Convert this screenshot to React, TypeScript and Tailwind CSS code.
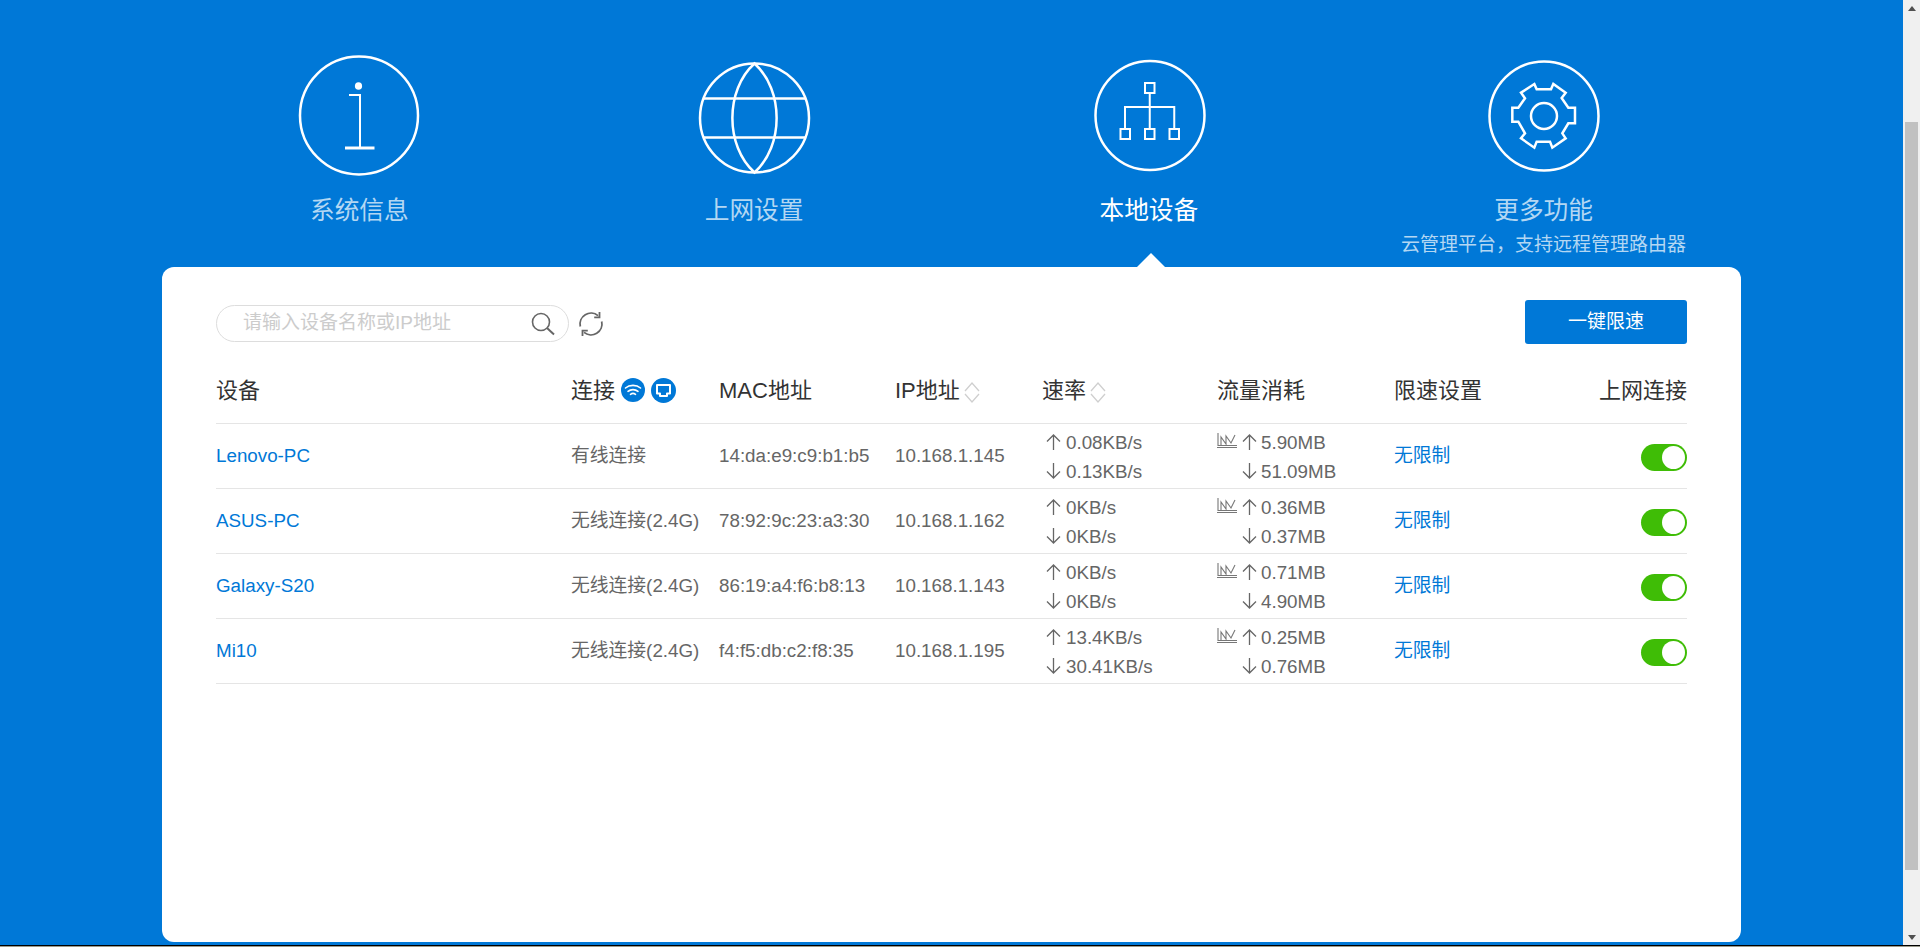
const FONT = "font-['Liberation_Sans','Noto_Sans_CJK_SC',sans-serif]";

const rows = [
  { name: "Lenovo-PC", conn: "有线连接", mac: "14:da:e9:c9:b1:b5", ip: "10.168.1.145", up: "0.08KB/s", down: "0.13KB/s", sent: "5.90MB", recv: "51.09MB" },
  { name: "ASUS-PC", conn: "无线连接(2.4G)", mac: "78:92:9c:23:a3:30", ip: "10.168.1.162", up: "0KB/s", down: "0KB/s", sent: "0.36MB", recv: "0.37MB" },
  { name: "Galaxy-S20", conn: "无线连接(2.4G)", mac: "86:19:a4:f6:b8:13", ip: "10.168.1.143", up: "0KB/s", down: "0KB/s", sent: "0.71MB", recv: "4.90MB" },
  { name: "Mi10", conn: "无线连接(2.4G)", mac: "f4:f5:db:c2:f8:35", ip: "10.168.1.195", up: "13.4KB/s", down: "30.41KB/s", sent: "0.25MB", recv: "0.76MB" },
];

const COLS = "grid grid-cols-[355px_148px_176px_147px_175px_177px_150px_1fr] items-center border-b border-[#e5e5e5]";

const InfoIcon = () => (
  <svg width="124" height="124" viewBox="0 0 124 124" fill="none" stroke="white" strokeWidth="2.5">
    <circle cx="62" cy="61.5" r="59" />
    <ellipse cx="61.5" cy="32" rx="3.6" ry="3.8" fill="white" stroke="none" />
    <path d="M52 41H63V94" strokeWidth="2" />
    <path d="M48 94H77.5" strokeWidth="3" />
  </svg>
);

const GlobeIcon = () => (
  <svg width="124" height="124" viewBox="0 0 124 124" fill="none" stroke="white" strokeWidth="2.5">
    <circle cx="62.5" cy="64" r="54.5" />
    <path d="M62.5 9.5C92 36 92 92 62.5 118.5C33 92 33 36 62.5 9.5Z" />
    <path d="M11.5 44.6H113.5M11.5 83.4H113.5" />
  </svg>
);

const NetworkIcon = () => (
  <svg width="124" height="124" viewBox="0 0 124 124" fill="none" stroke="white" strokeWidth="2">
    <circle cx="63" cy="61.5" r="54.5" strokeWidth="2.5" />
    <rect x="58" y="29" width="9.5" height="10" />
    <rect x="33.5" y="75" width="9.5" height="10" />
    <rect x="58" y="75" width="9.5" height="10" />
    <rect x="82.5" y="75" width="9.5" height="10" />
    <path d="M62.75 39V75M38 75V53H87.25V75" />
  </svg>
);

const GearIcon = () => (
  <svg width="124" height="124" viewBox="0 0 124 124" fill="none" stroke="white" strokeWidth="2.5">
    <circle cx="62" cy="62" r="54.5" />
    <g transform="translate(13 16) scale(0.3333)" strokeWidth="7.5">
      <path d="M118 42L125 58H168L175 42L212 68L200 84L220 113H240V160H220L202 190L212 205L172 233L165 215H125L118 233L78 205L90 190L70 155H52V113H70L90 85L78 68Z" />
      <circle cx="147" cy="138" r="39" />
    </g>
  </svg>
);

const navItems = [
  { label: "系统信息", icon: <InfoIcon /> },
  { label: "上网设置", icon: <GlobeIcon /> },
  { label: "本地设备", icon: <NetworkIcon />, active: true },
  { label: "更多功能", icon: <GearIcon />, sub: "云管理平台，支持远程管理路由器" },
];

const ArrowUp = () => (
  <svg width="15" height="16" viewBox="0 0 15 16" fill="none" stroke="#666" strokeWidth="1.3" className="shrink-0">
    <path d="M7.5 16V1M1 7.5L7.5 1L14 7.5" />
  </svg>
);

const ArrowDown = () => (
  <svg width="15" height="16" viewBox="0 0 15 16" fill="none" stroke="#666" strokeWidth="1.3" className="shrink-0">
    <path d="M7.5 0V15M1 8.5L7.5 15L14 8.5" />
  </svg>
);

const ChartIcon = () => (
  <svg width="20" height="15" viewBox="0 0 20 15" fill="none" stroke="#777" strokeWidth="1.1" className="mt-[-4px] shrink-0">
    <path d="M1 0V12.5H20M0 14.5H20" />
    <path d="M4 12V4L9 11V3L14 10L18 2" />
  </svg>
);

const SortIcon = () => (
  <svg width="16" height="21" viewBox="0 0 16 21" fill="none" stroke="#cfcfcf" strokeWidth="1.3" className="ml-[4px] mt-[3px]">
    <path d="M1 9L8 1L15 9M1 12L8 20L15 12" />
  </svg>
);

const WifiBadge = () => (
  <svg width="24" height="24" viewBox="0 0 24 24" fill="none" stroke="white" strokeWidth="1.6" strokeLinecap="round">
    <circle cx="12" cy="12" r="12" fill="#0078d7" stroke="none" />
    <path d="M4.5 10C8.5 6.5 15.5 6.5 19.5 10M7 13.3C9.8 11 14.2 11 17 13.3M9.5 16.3C11 15.2 13 15.2 14.5 16.3" />
  </svg>
);

const LanBadge = () => (
  <svg width="25" height="25" viewBox="0 0 25 25" fill="none" stroke="white" strokeWidth="2" strokeLinejoin="round">
    <circle cx="12.5" cy="12.5" r="12.5" fill="#0078d7" stroke="none" />
    <path d="M6 7H19V15.5H16V18H9V15.5H6Z" />
  </svg>
);

const SearchIcon = () => (
  <svg width="24" height="24" viewBox="0 0 24 24" fill="none" stroke="#666" strokeWidth="1.6" className="shrink-0">
    <circle cx="10" cy="10" r="8.5" />
    <path d="M16 16L23 22.5" strokeWidth="2" />
  </svg>
);

const RefreshIcon = () => (
  <svg width="26" height="26" viewBox="0 0 26 26" fill="none" stroke="#666" strokeWidth="1.8" className="ml-[9px] mt-[11px] shrink-0">
    <path d="M20 4.6A11 11 0 0 0 2.3 15.5" />
    <path d="M6 21.4A11 11 0 0 0 23.7 10.5" />
    <path d="M21.5 1V6.3H16.2M4.5 25V19.7H9.8" />
  </svg>
);

const Rate = ({ up, down }: { up: string; down: string }) => (
  <div className="flex flex-col pt-[1px] pl-[4px] leading-[29px] text-[18.8px] text-[#666]">
    <div className="flex items-center gap-[5px]"><ArrowUp />{up}</div>
    <div className="flex items-center gap-[5px]"><ArrowDown />{down}</div>
  </div>
);

const Traffic = ({ sent, recv }: { sent: string; recv: string }) => (
  <div className="flex flex-col pt-[1px] leading-[29px] text-[18.8px] text-[#666]">
    <div className="flex items-center">
      <ChartIcon />
      <span className="ml-[5px] mr-[4px]"><ArrowUp /></span>
      {sent}
    </div>
    <div className="flex items-center pl-[25px]">
      <span className="mr-[4px]"><ArrowDown /></span>
      {recv}
    </div>
  </div>
);

const Toggle = () => (
  <div className="ml-auto mt-[3px] flex h-[27px] w-[46px] items-center justify-end rounded-full bg-[#3fbd06] pr-[2px]">
    <div className="h-[23px] w-[23px] rounded-full bg-white" />
  </div>
);

export default function App() {
  return (
    <div className={`flex h-[947px] flex-col overflow-hidden ${FONT}`}>
      <div className="flex min-h-0 flex-1">
        <main className="flex-1 bg-[#0078d7] px-[162px]">
          <nav className="grid h-[267px] grid-cols-4">
            {navItems.map((item) => (
              <div key={item.label} className="relative flex flex-col items-center pt-[54px]">
                {item.icon}
                <div className={`mt-[17px] text-[24.7px] leading-[32px] ${item.active ? "text-white" : "text-[#b3d7f3]"}`}>
                  {item.label}
                </div>
                {item.sub && <div className="mt-[5px] text-[19px] leading-[26px] text-[#b3d7f3]">{item.sub}</div>}
                {item.active && (
                  <div className="absolute bottom-0 left-1/2 ml-[-12px] h-0 w-0 border-x-[14px] border-b-[14px] border-x-transparent border-b-white" />
                )}
              </div>
            ))}
          </nav>

          <section className="h-[675px] rounded-xl bg-white px-[54px] pt-[33px]">
            <div className="flex h-[44px] items-start">
              <div className="mt-[5px] flex h-[37px] w-[353px] items-center rounded-full border border-[#ddd] pl-[26px] pr-[13px]">
                <span className="flex-1 text-[19px] text-[#ccc]">请输入设备名称或IP地址</span>
                <SearchIcon />
              </div>
              <RefreshIcon />
              <button className="ml-auto h-[44px] w-[162px] rounded-[3px] bg-[#0078d7] text-[19px] text-white">一键限速</button>
            </div>

            <div className={`${COLS} h-[80px] pt-[14px] text-[22px] text-[#333]`}>
              <div>设备</div>
              <div className="flex items-center">
                连接
                <span className="ml-[6px] flex gap-[6px]"><WifiBadge /><LanBadge /></span>
              </div>
              <div>MAC地址</div>
              <div className="flex items-center">IP地址<SortIcon /></div>
              <div className="flex items-center">速率<SortIcon /></div>
              <div>流量消耗</div>
              <div>限速设置</div>
              <div className="text-right">上网连接</div>
            </div>

            {rows.map((r) => (
              <div key={r.name} className={`${COLS} h-[65px] text-[18.8px] text-[#666]`}>
                <div className="text-[#0078d7]">{r.name}</div>
                <div>{r.conn}</div>
                <div>{r.mac}</div>
                <div>{r.ip}</div>
                <Rate up={r.up} down={r.down} />
                <Traffic sent={r.sent} recv={r.recv} />
                <div className="text-[#0078d7]">无限制</div>
                <Toggle />
              </div>
            ))}
          </section>
        </main>

        <aside className="flex w-[17px] flex-col items-center bg-[#f0f0f0]">
          <div className="mt-[6px] h-0 w-0 border-x-[4px] border-b-[5px] border-x-transparent border-b-[#505050]" />
          <div className="ml-[2px] mt-[111px] h-[748px] w-[13px] self-start bg-[#c1c1c1]" />
          <div className="mt-auto mb-[5px] h-0 w-0 border-x-[4px] border-t-[5px] border-x-transparent border-t-[#505050]" />
        </aside>
      </div>
      <div className="h-px bg-black" />
      <div className="h-px bg-[#9a9a8c]" />
    </div>
  );
}
